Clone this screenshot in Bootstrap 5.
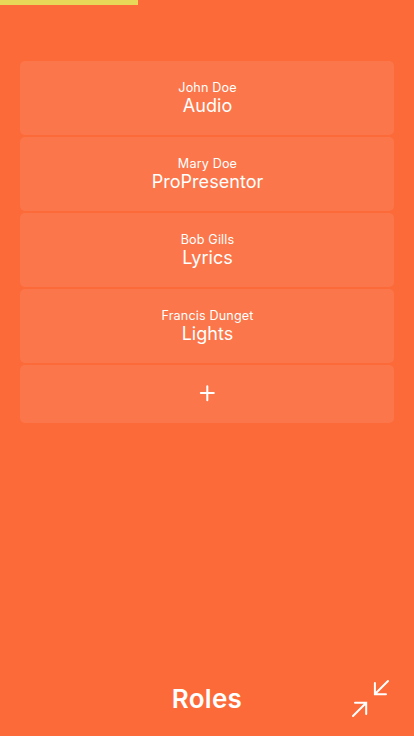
<!DOCTYPE html>
<html lang="en"><head><meta charset="utf-8"><meta name="viewport" content="width=device-width, initial-scale=1"><title>Roles</title>
<link rel="stylesheet" href="https://cdn.jsdelivr.net/npm/bootstrap@5.3.0/dist/css/bootstrap.min.css">
<style>
body{background:#fd6a39;color:#fff;font-family:Inter,sans-serif;height:736px}
.step-progress{height:5px;background:transparent;border-radius:0}
.step-progress .progress-bar{width:138px;background:#e8d859}
.role-list{padding:56px 20px 0;gap:2px}
.role-item{height:74px;background:#fb774b;border-radius:5px;color:#fff;padding:18px 0 0 1px}
.role-add{height:58px;background:#fb774b;border-radius:5px}
.person{font-size:12.6px;line-height:17px;letter-spacing:.16px}
.role-name{font-size:18px;line-height:20px;letter-spacing:.04px;font-weight:400}
.page-footer{height:74px;padding-top:21px}
.page-title{font-size:26px;line-height:32px;font-weight:600;letter-spacing:.3px}
.collapse-btn{right:24px;top:17px;line-height:0}
</style></head>
<body class="d-flex flex-column overflow-hidden">
<div class="progress step-progress"><div class="progress-bar"></div></div>
<main class="d-flex flex-column role-list flex-grow-1">
<div class="role-item text-center"><div class="person">John Doe</div><div class="role-name">Audio</div></div>
<div class="role-item text-center"><div class="person">Mary Doe</div><div class="role-name">ProPresentor</div></div>
<div class="role-item text-center"><div class="person">Bob Gills</div><div class="role-name">Lyrics</div></div>
<div class="role-item text-center"><div class="person">Francis Dunget</div><div class="role-name">Lights</div></div>
<button class="btn p-0 border-0 role-add d-flex align-items-center justify-content-center" aria-label="Add role"><svg width="18" height="18" viewBox="0 0 18 18" stroke="#fff" stroke-width="2" stroke-linecap="round"><path d="M9.3 1.2v14M2.8 8h13"/></svg></button>
</main>
<footer class="page-footer position-relative text-center"><h1 class="page-title m-0">Roles</h1>
<button class="btn p-0 border-0 position-absolute collapse-btn" aria-label="Collapse"><svg width="39" height="39" viewBox="0 0 39 39" fill="none" stroke="#fff" stroke-width="2" stroke-linecap="round"><path d="M37 2L24 15M23.9 4v11.2H35M2 37L15 24M4 23.8h11.2V35"/></svg></button></footer>
<script src="https://cdn.jsdelivr.net/npm/bootstrap@5.3.0/dist/js/bootstrap.bundle.min.js"></script>
</body></html>
